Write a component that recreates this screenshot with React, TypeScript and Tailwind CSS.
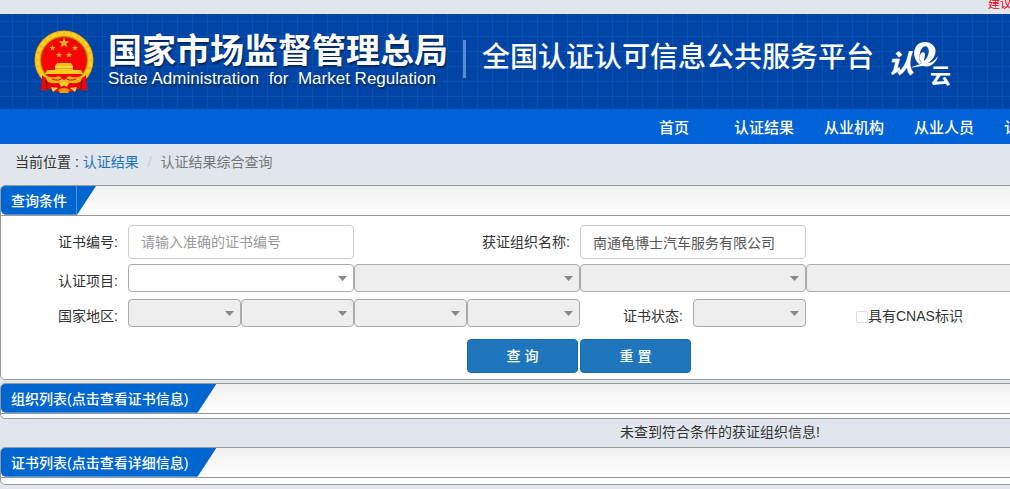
import { useState } from 'react';
import type { ReactNode } from 'react';
import clsx from 'clsx';

const navItems = ['首页', '认证结果', '从业机构', '从业人员', '认'];

function Emblem() {
  const star = '0,-5 1.2,-1.6 4.8,-1.5 1.9,0.6 3,4 0,2 -3,4 -1.9,0.6 -4.8,-1.5 -1.2,-1.6';
  return (
    <svg viewBox="0 0 60 64" className="h-16 w-15 shrink-0" role="img" aria-label="国徽">
      <circle cx="30" cy="30" r="29.5" fill="#e9a800" />
      <circle cx="30" cy="30" r="26.5" fill="none" stroke="#ffcf26" strokeWidth="4" />
      <circle cx="30" cy="30" r="27" fill="none" stroke="#d49400" strokeWidth="3" strokeDasharray="2 5" opacity="0.35" />
      <circle cx="30" cy="30" r="23" fill="#f90404" stroke="#a84b00" strokeWidth="0.8" />
      <g fill="#e3b41c">
        <polygon points={star} transform="translate(30 13) scale(1.15)" />
        <polygon points={star} transform="translate(18.5 18) scale(0.65)" />
        <polygon points={star} transform="translate(41 18) scale(0.65)" />
        <polygon points={star} transform="translate(25 25) scale(0.65)" />
        <polygon points={star} transform="translate(35 25) scale(0.65)" />
      </g>
      {/* Gate */}
      <path d="M23 33 H37 L39 36 H21 Z" fill="#f5bd18" />
      <path d="M21 36 H39 V40 H21 Z" fill="#ffd73c" />
      <path d="M13 40 H47 L49 44 H11 Z" fill="#ffcb22" />
      <path d="M21 38.500 H39" stroke="#d88e05" strokeWidth="0.8" />
      {/* Drapery */}
      <path d="M8 45 Q13 50 20 50 L30 53 L40 50 Q47 50 52 45 L53 61 L44 59 L38 62 H22 L16 59 L7 61 Z" fill="#e80808" />
      <path d="M12 50 L13 59 M48 50 L47 59" stroke="#a00a0a" strokeWidth="1.5" />
      <path d="M10 45 Q18 49 25 46 L30 50 L35 46 Q42 49 50 45 L46 52 Q38 55 30 51 Q22 55 14 52 Z" fill="#f0b016" />
      <path d="M18 49 Q25 52 30 47 Q35 52 42 49" fill="none" stroke="#c61509" strokeWidth="1" />
      <path d="M25 53 Q30 49 35 53 L33 57 Q30 54 27 57 Z" fill="#f8ca31" />
      <path d="M17 57 L24 58 L19 62 Z M43 57 L36 58 L41 62 Z" fill="#ffd43b" />
      <path d="M24 60 Q30 56 36 60 L34 63 H26 Z" fill="#ed9c0a" />
    </svg>
  );
}

function CloudLogo() {
  return (
    <svg
      viewBox="0 0 62 46"
      className="h-[46px] w-[62px] shrink-0 overflow-visible fill-white font-['Noto_Sans_CJK_SC',sans-serif]"
      role="img"
      aria-label="认e云"
    >
      <text x="-2" y="32" fontSize="26" fontWeight="900" fontStyle="italic">
        认
      </text>
      <path
        fillRule="evenodd"
        d="M29 23 C24 19 22 10 27 4 C32 -1 42 0 45 7 C47 13 43 19 38 22 C42 22 45 19 48 15 C46 22 40 27 33 25 C29 25 25 26 21 27 C25 24 29 24 32 22 C30 20 29 17 30 14 C31 11 34 10 35 13 C35 16 34 18 34 20 C38 17 40 10 38 7 C35 3 31 7 30 12 C29 16 29 20 32 22 Z"
      />
      <text x="40" y="42" fontSize="21" fontWeight="700">
        云
      </text>
    </svg>
  );
}

interface SelectBoxProps {
  label: string;
  id?: string;
  disabled?: boolean;
  className?: string;
}

function SelectBox({ label, id, disabled = true, className }: SelectBoxProps) {
  return (
    <div className={clsx('relative', className)}>
      <select
        id={id}
        aria-label={label}
        disabled={disabled}
        className="block h-7 w-full appearance-none rounded border border-[#aaa] bg-white px-2 text-[#444] disabled:bg-[#eee] disabled:opacity-100"
      >
        <option value="" />
      </select>
      <svg
        viewBox="0 0 9 5"
        className="pointer-events-none absolute top-3 right-[7px] h-[5px] w-[9px] fill-[#888]"
        aria-hidden="true"
      >
        <path d="M0 0 H9 L4.500 5 Z" />
      </svg>
    </div>
  );
}

function FieldLabel({ htmlFor, className, children }: { htmlFor: string; className?: string; children: ReactNode }) {
  return (
    <label htmlFor={htmlFor} className={clsx('pr-[10px] text-right leading-[34px]', className)}>
      {children}
    </label>
  );
}

interface PanelProps {
  title: string;
  divided?: boolean;
  children?: ReactNode;
}

function Panel({ title, divided, children }: PanelProps) {
  return (
    <section className="overflow-hidden rounded-[5px] border border-[#999] bg-white">
      <div className="flex border-b border-[#999] bg-linear-to-b from-[#f1f1f1] to-white">
        <h2 className="flex h-[29px] rounded-bl-[5px] border-b border-[#4d93de] bg-[#0066cf] pr-[19px] text-sm font-medium text-white [clip-path:polygon(0_0,100%_0,calc(100%-19px)_100%,0_100%)]">
          <span className={clsx('pr-[9px] pl-[10px] leading-[30px]', divided && 'border-r border-[#4d93de]')}>
            {title}
          </span>
        </h2>
      </div>
      {children}
    </section>
  );
}

export default function App() {
  const [certNo, setCertNo] = useState('');
  const [orgName, setOrgName] = useState('南通龟博士汽车服务有限公司');
  const [cnas, setCnas] = useState(false);

  const handleReset = () => {
    setCertNo('');
    setOrgName('');
    setCnas(false);
  };

  return (
    <div className="min-h-screen overflow-hidden bg-[#e1e6ed] font-['Liberation_Sans','Noto_Sans_CJK_SC',sans-serif] text-sm text-[#333]">
      <div className="min-w-[1440px]">
        {/* Notice */}
        <div className="flex h-[14px] items-end overflow-hidden pb-1 pl-[988px] text-xs leading-3 text-[#e60012]">
          建议
        </div>

        {/* Banner */}
        <header className="flex h-[95px] items-start bg-[#0045a6] bg-[linear-gradient(to_right,#0552b1_1px,transparent_1px),linear-gradient(to_bottom,#0552b1_1px,transparent_1px)] bg-[size:15px_15px] bg-[position:12px_7px] pt-4 pl-[34px] text-white">
          <Emblem />
          <div className="ml-[14px] pt-[3px] text-shadow-[1px_2px_2px_rgb(0_0_0/0.5)]">
            <h1 className="text-[34px] leading-9 font-bold">国家市场监督管理总局</h1>
            <p className="text-[17px] leading-5 whitespace-pre">State Administration  for  Market Regulation</p>
          </div>
          <div className="mt-[10px] ml-[15px] h-[38px] w-[3px] bg-[#5c8ccd]" />
          <p className="mt-[10px] ml-4 text-[28px] leading-9 font-medium">全国认证认可信息公共服务平台</p>
          <div className="mt-[11px] ml-4">
            <CloudLogo />
          </div>
        </header>

        {/* Nav */}
        <nav className="flex h-[35px] bg-[#0062d6] pl-[629px] text-[15px] leading-[37px] font-medium text-white">
          {navItems.map((item) => (
            <a key={item} href="#" className={clsx('w-[90px]', item === '首页' ? 'px-[30px]' : 'px-[15px]')}>
              {item}
            </a>
          ))}
        </nav>

        {/* Breadcrumb */}
        <div className="flex h-[41px] pl-[15px] leading-9">
          <span className="whitespace-pre">当前位置 : </span>
          <a href="#" className="text-[#1e73bb]">
            认证结果
          </a>
          <span className="mx-[9px] text-[#ccc]">/</span>
          <span className="text-[#777]">认证结果综合查询</span>
        </div>

        <Panel title="查询条件" divided>
          <form className="pt-[9px] pr-[68px] pb-[6px] pl-[14px]" onSubmit={(e) => e.preventDefault()}>
            <div className="grid h-[39px] grid-cols-12 items-start">
              <FieldLabel htmlFor="cert-no">证书编号:</FieldLabel>
              <input
                id="cert-no"
                type="text"
                value={certNo}
                onChange={(e) => setCertNo(e.target.value)}
                placeholder="请输入准确的证书编号"
                className="col-span-2 h-[34px] rounded border border-[#ccc] px-3 text-[#555] placeholder:text-[#999]"
              />
              <FieldLabel htmlFor="org-name" className="col-span-2 col-start-4">
                获证组织名称:
              </FieldLabel>
              <input
                id="org-name"
                type="text"
                value={orgName}
                onChange={(e) => setOrgName(e.target.value)}
                className="col-span-2 h-[34px] rounded border border-[#ccc] px-3 text-[#555]"
              />
            </div>

            <div className="grid h-[35px] grid-cols-12 items-start">
              <FieldLabel htmlFor="project">认证项目:</FieldLabel>
              <SelectBox id="project" label="认证项目" disabled={false} className="col-span-2" />
              <SelectBox label="认证项目" className="col-span-2" />
              <SelectBox label="认证项目" className="col-span-2" />
              <SelectBox label="认证项目" className="col-span-2" />
            </div>

            <div className="grid h-[35px] grid-cols-12 items-start">
              <FieldLabel htmlFor="region">国家地区:</FieldLabel>
              <SelectBox id="region" label="国家地区" />
              <SelectBox label="国家地区" />
              <SelectBox label="国家地区" />
              <SelectBox label="国家地区" />
              <FieldLabel htmlFor="status">证书状态:</FieldLabel>
              <SelectBox id="status" label="证书状态" />
              <label className="col-span-2 flex items-center pl-[50px] leading-[34px]">
                <input
                  type="checkbox"
                  checked={cnas}
                  onChange={(e) => setCnas(e.target.checked)}
                  className="mt-[2px] size-3 appearance-none rounded-xs border border-[#ddd] bg-white checked:bg-[#1e73bb]"
                />
                具有CNAS标识
              </label>
            </div>

            <div className="mt-[5px] grid grid-cols-12 font-medium text-white">
              <button
                type="submit"
                className="col-start-5 mr-[2px] h-[34px] rounded border border-[#1b69ab] bg-[#1f76bd] hover:bg-[#1b69ab]"
              >
                查 询
              </button>
              <button
                type="button"
                onClick={handleReset}
                className="mr-[2px] h-[34px] rounded border border-[#1b69ab] bg-[#1f76bd] hover:bg-[#1b69ab]"
              >
                重 置
              </button>
            </div>
          </form>
        </Panel>

        {/* Results */}
        <div className="pt-[3px]">
          <Panel title="组织列表(点击查看证书信息)">
            <div className="h-1" />
          </Panel>
          <p className="pb-[2px] text-center leading-[26px]">未查到符合条件的获证组织信息!</p>
          <Panel title="证书列表(点击查看详细信息)">
            <div className="h-[6px]" />
          </Panel>
        </div>
      </div>
    </div>
  );
}
